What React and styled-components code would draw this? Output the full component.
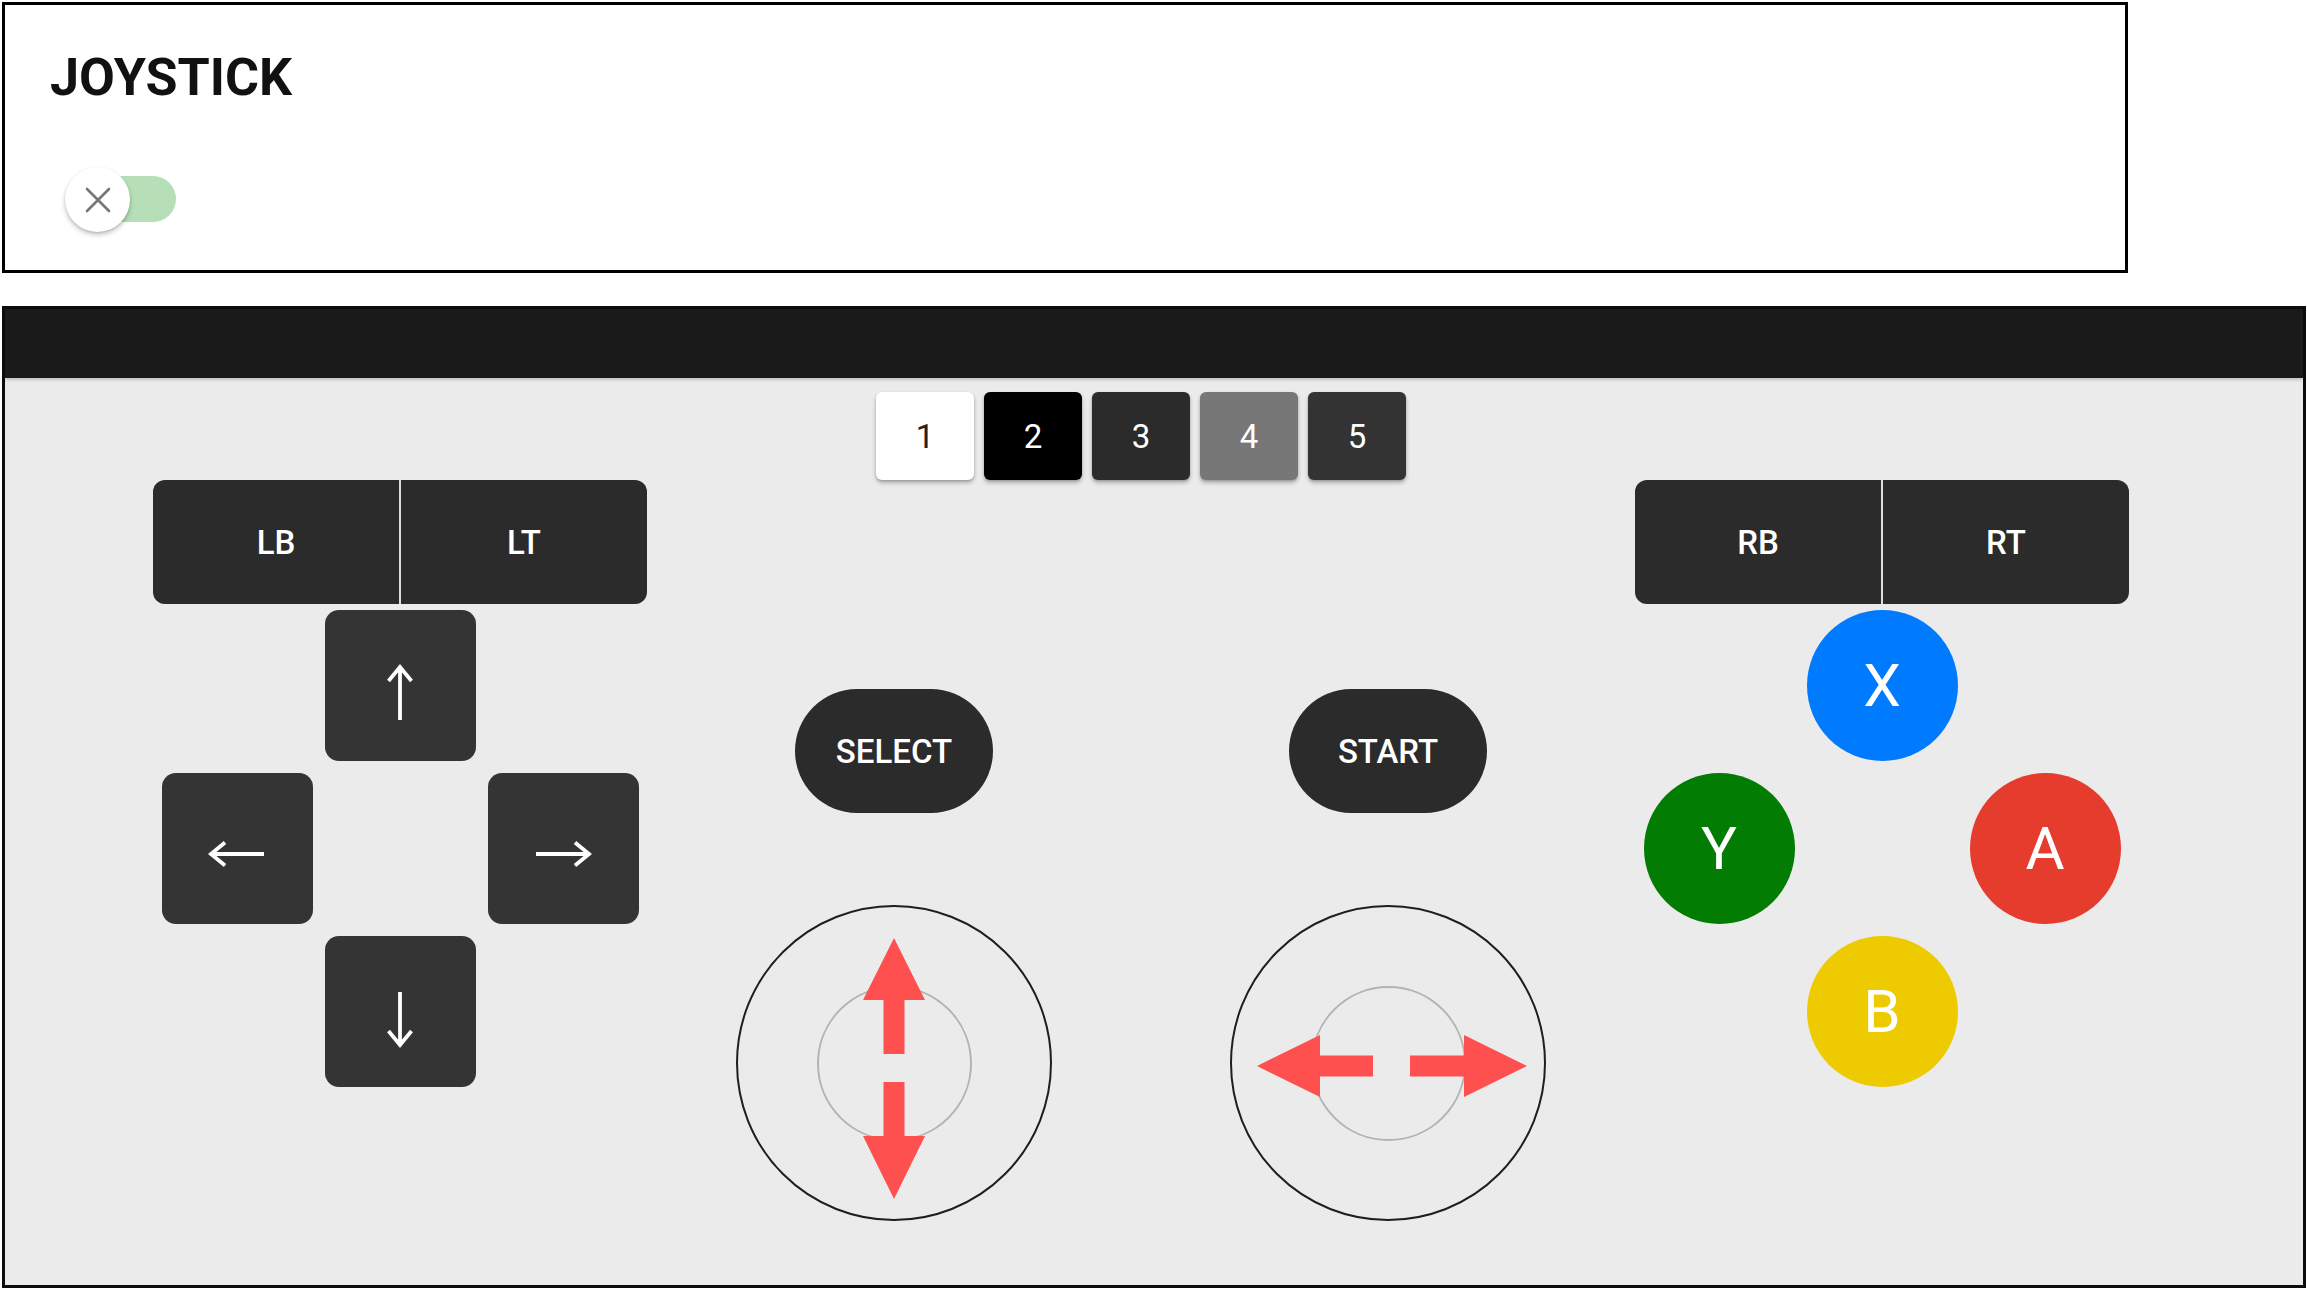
import React, { useState } from 'react';
import styled, { createGlobalStyle } from 'styled-components';

const GlobalStyle = createGlobalStyle`
	html, body {
		margin: 0;
		padding: 0;
		background: #fff;
	}
	body {
		font-family: Roboto, 'Liberation Sans', Arial, sans-serif;
	}
	* {
		box-sizing: border-box;
	}
`;

const Page = styled.div`
	width: 2307px;
	padding: 2px 0 0 2px;
`;

const SettingsCard = styled.section`
	width: 2126px;
	height: 271px;
	border: 3px solid #000;
	background: #fff;
	padding: 43px 0 0 45px;
`;

const Title = styled.h1`
	margin: 0;
	font-size: 52px;
	line-height: 60px;
	font-weight: 700;
	color: #111;
`;

const SwitchRoot = styled.button`
	position: relative;
	display: block;
	margin: 59px 0 0 15px;
	width: 112px;
	height: 65px;
	padding: 0;
	border: none;
	background: transparent;
	cursor: pointer;
`;

const SwitchTrack = styled.span`
	position: absolute;
	left: 2px;
	top: 9px;
	width: 109px;
	height: 46px;
	border-radius: 23px;
	background: ${p => (p.$on ? '#b6dfb7' : '#c9c9c9')};
`;

const SwitchThumb = styled.span`
	position: absolute;
	left: 0;
	top: 0;
	width: 65px;
	height: 65px;
	border-radius: 50%;
	background: #fff;
	box-shadow: 0 3px 5px rgba(0, 0, 0, 0.22), 0 1px 2px rgba(0, 0, 0, 0.12);
	display: flex;
	align-items: center;
	justify-content: center;
`;

const Pad = styled.section`
	margin-top: 33px;
	width: 2304px;
	height: 982px;
	border: 3px solid #0d0d0d;
	background: #ebebeb;
	display: flex;
	flex-direction: column;
`;

const PadHeader = styled.div`
	height: 69px;
	background: #1a1a1a;
	box-shadow: 0 2px 3px rgba(0, 0, 0, 0.18);
	flex-shrink: 0;
`;

const PadBody = styled.div`
	padding: 14px 0 0 148px;
	width: 2124px;
`;

const TabRow = styled.div`
	display: flex;
	justify-content: center;
	gap: 10px;
`;

const tabColors = {
	light: ['#ffffff', '#222'],
	black: ['#000000', '#fff'],
	dark: ['#2b2b2b', '#fff'],
	grey: ['#777777', '#fff'],
	charcoal: ['#333333', '#fff'],
};

const Tab = styled.button`
	width: 98px;
	height: 88px;
	border: none;
	border-radius: 6px;
	background: ${p => tabColors[p.$variant][0]};
	color: ${p => tabColors[p.$variant][1]};
	font-family: inherit;
	font-size: 33px;
	font-weight: 400;
	box-shadow: 0 3px 4px rgba(0, 0, 0, 0.25), 0 1px 2px rgba(0, 0, 0, 0.15);
	cursor: pointer;
`;

const Controller = styled.div`
	display: grid;
	grid-template-columns: repeat(4, 494px);
`;

const Column = styled.div`
	display: flex;
	flex-direction: column;
	align-items: center;
`;

const ShoulderBar = styled.div`
	width: 100%;
	height: 124px;
	display: flex;
	gap: 2px;
	background: #ddd;
	border-radius: 12px;
	overflow: hidden;
`;

const ShoulderButton = styled.button`
	flex: 1;
	border: none;
	background: #2b2b2b;
	color: #fff;
	font-family: inherit;
	font-size: 33px;
	font-weight: 500;
	cursor: pointer;
`;

const KeyGrid = styled.div`
	margin-top: 6px;
	display: grid;
	grid-template-columns: repeat(3, 151px);
	grid-template-rows: repeat(3, 151px);
	gap: 12px;
`;

const DirKey = styled.button`
	grid-column: ${p => p.$col};
	grid-row: ${p => p.$row};
	border: none;
	border-radius: 14px;
	background: #343434;
	display: flex;
	align-items: center;
	justify-content: center;
	padding: ${p => (p.$vertical ? '14px 0 0' : '10px 0 0')};
	cursor: pointer;
`;

const FaceButton = styled.button`
	grid-column: ${p => p.$col};
	grid-row: ${p => p.$row};
	border: none;
	border-radius: 50%;
	background: ${p => p.$color};
	color: #fff;
	font-family: inherit;
	font-size: 60px;
	font-weight: 400;
	cursor: pointer;
`;

const PillButton = styled.button`
	margin-top: 209px;
	width: 198px;
	height: 124px;
	border: none;
	border-radius: 62px;
	background: #2b2b2b;
	color: #fff;
	font-family: inherit;
	font-size: 33px;
	font-weight: 500;
	cursor: pointer;
`;

const Stick = styled.div`
	position: relative;
	margin-top: 92px;
	width: 316px;
	height: 316px;
	border: 2px solid #1e1e1e;
	border-radius: 50%;
	display: flex;
	align-items: center;
	justify-content: center;
`;

const StickInner = styled.div`
	width: 155px;
	height: 155px;
	border: 2px solid #b3b3b3;
	border-radius: 50%;
`;

const StickArrows = styled.svg`
	position: absolute;
	left: -2px;
	top: -2px;
	width: 316px;
	height: 316px;
`;

const RED = '#ff5050';

function CrossIcon() {
	return (
		<svg width='26' height='26' viewBox='0 0 26 26'>
			<path d='M2 2 L24 24 M24 2 L2 24' stroke='#767676' strokeWidth='2.6' strokeLinecap='round' />
		</svg>
	);
}

function Arrow({ dir }) {
	const rot = { up: 0, right: 90, down: 180, left: 270 }[dir];
	return (
		<svg width='60' height='60' viewBox='0 0 60 60'>
			<g transform={`rotate(${rot} 30 30)`}>
				<path d='M30 3 L30 57' stroke='#fff' strokeWidth='3.8' />
				<path d='M18.5 18 L30 4 L41.5 18' stroke='#fff' strokeWidth='3.8' fill='none' strokeLinejoin='miter' />
			</g>
		</svg>
	);
}

function VerticalArrows() {
	return (
		<StickArrows viewBox='-158 -158 316 316'>
			<polygon fill={RED} points='0,-125 31,-63 10.5,-63 10.5,-9 -10.5,-9 -10.5,-63 -31,-63' />
			<polygon fill={RED} points='0,136 31,73 10.5,73 10.5,19 -10.5,19 -10.5,73 -31,73' />
		</StickArrows>
	);
}

function HorizontalArrows() {
	return (
		<StickArrows viewBox='-158 -158 316 316'>
			<polygon fill={RED} points='-131,3 -68,-28 -68,-7.5 -15,-7.5 -15,13.5 -68,13.5 -68,34' />
			<polygon fill={RED} points='139,3 76,-28 76,-7.5 22,-7.5 22,13.5 76,13.5 76,34' />
		</StickArrows>
	);
}

const tabs = [
	{ label: '1', variant: 'light' },
	{ label: '2', variant: 'black' },
	{ label: '3', variant: 'dark' },
	{ label: '4', variant: 'grey' },
	{ label: '5', variant: 'charcoal' },
];

export default function App() {
	const [enabled, setEnabled] = useState(true);

	return (
		<Page>
			<GlobalStyle />
			<SettingsCard>
				<Title>JOYSTICK</Title>
				<SwitchRoot onClick={() => setEnabled(!enabled)} aria-label='toggle joystick'>
					<SwitchTrack $on={enabled} />
					<SwitchThumb>
						<CrossIcon />
					</SwitchThumb>
				</SwitchRoot>
			</SettingsCard>

			<Pad>
				<PadHeader />
				<PadBody>
					<TabRow>
						{tabs.map(t => (
							<Tab key={t.label} $variant={t.variant}>
								{t.label}
							</Tab>
						))}
					</TabRow>
					<Controller>
						<Column>
							<ShoulderBar>
								<ShoulderButton>LB</ShoulderButton>
								<ShoulderButton>LT</ShoulderButton>
							</ShoulderBar>
							<KeyGrid>
								<DirKey $col={2} $row={1} $vertical>
									<Arrow dir='up' />
								</DirKey>
								<DirKey $col={1} $row={2}>
									<Arrow dir='left' />
								</DirKey>
								<DirKey $col={3} $row={2}>
									<Arrow dir='right' />
								</DirKey>
								<DirKey $col={2} $row={3} $vertical>
									<Arrow dir='down' />
								</DirKey>
							</KeyGrid>
						</Column>
						<Column>
							<PillButton>SELECT</PillButton>
							<Stick>
								<StickInner />
								<VerticalArrows />
							</Stick>
						</Column>
						<Column>
							<PillButton>START</PillButton>
							<Stick>
								<StickInner />
								<HorizontalArrows />
							</Stick>
						</Column>
						<Column>
							<ShoulderBar>
								<ShoulderButton>RB</ShoulderButton>
								<ShoulderButton>RT</ShoulderButton>
							</ShoulderBar>
							<KeyGrid>
								<FaceButton $col={2} $row={1} $color='#007bff'>X</FaceButton>
								<FaceButton $col={1} $row={2} $color='#027c02'>Y</FaceButton>
								<FaceButton $col={3} $row={2} $color='#e53c2d'>A</FaceButton>
								<FaceButton $col={2} $row={3} $color='#edcb00'>B</FaceButton>
							</KeyGrid>
						</Column>
					</Controller>
				</PadBody>
			</Pad>
		</Page>
	);
}
